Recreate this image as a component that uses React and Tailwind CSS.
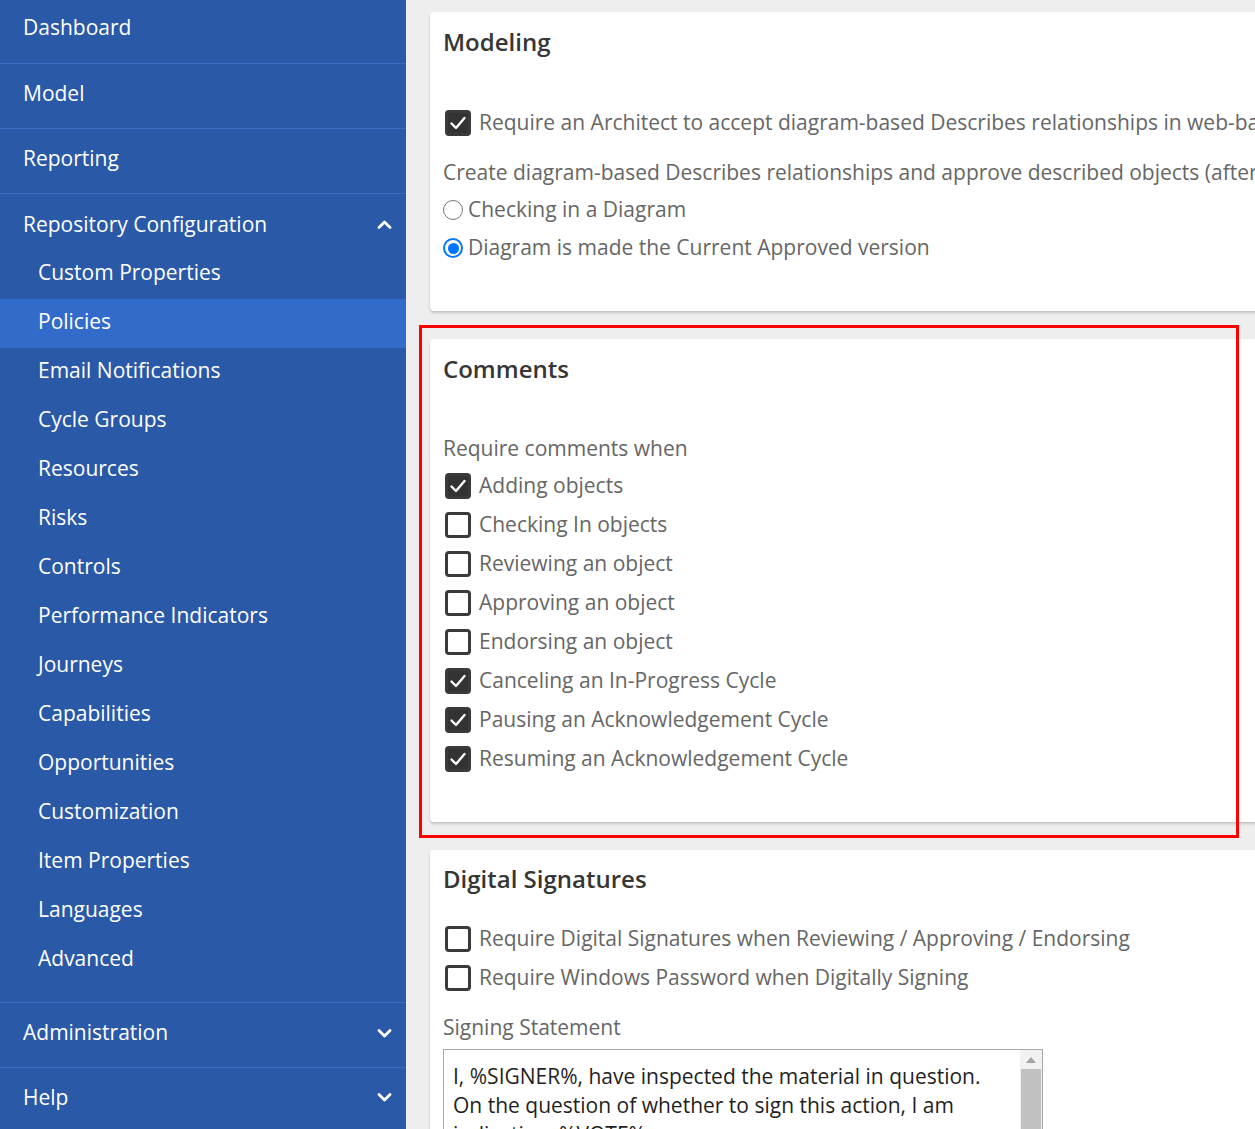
import React from "react";

const topItems = ["Dashboard", "Model", "Reporting"];
const subItems = [
  "Custom Properties",
  "Policies",
  "Email Notifications",
  "Cycle Groups",
  "Resources",
  "Risks",
  "Controls",
  "Performance Indicators",
  "Journeys",
  "Capabilities",
  "Opportunities",
  "Customization",
  "Item Properties",
  "Languages",
  "Advanced",
];

const comments = [
  ["Adding objects", true],
  ["Checking In objects", false],
  ["Reviewing an object", false],
  ["Approving an object", false],
  ["Endorsing an object", false],
  ["Canceling an In-Progress Cycle", true],
  ["Pausing an Acknowledgement Cycle", true],
  ["Resuming an Acknowledgement Cycle", true],
];

const Chevron = ({ up }) => (
  <svg width="15" height="9" viewBox="0 0 15 9" className="text-white">
    <path
      d={up ? "M2 7.5 L7.5 2 L13 7.5" : "M2 1.5 L7.5 7 L13 1.5"}
      fill="none"
      stroke="currentColor"
      strokeWidth="2.8"
      strokeLinecap="round"
      strokeLinejoin="round"
    />
  </svg>
);

const Checkbox = ({ checked }) => (
  <span
    className={`w-[26px] h-[26px] rounded-[4px] border-[3px] border-[#3a3a3a] flex items-center justify-center shrink-0 ${
      checked ? "bg-[#333333]" : "bg-white"
    }`}
  >
    {checked && (
      <svg width="18" height="16" viewBox="0 0 18 16">
        <path d="M2.5 8.5 L7 13 L15.5 3" fill="none" stroke="white" strokeWidth="2.4" strokeLinecap="round" strokeLinejoin="round" />
      </svg>
    )}
  </span>
);

const Radio = ({ checked }) => (
  <span
    className={`w-[20px] h-[20px] rounded-full border flex items-center justify-center shrink-0 bg-white ${
      checked ? "border-[#0075ff] border-2" : "border-[#777777]"
    }`}
  >
    {checked && <span className="w-[11px] h-[11px] rounded-full bg-[#0075ff]" />}
  </span>
);

const CheckRow = ({ label, checked }) => (
  <div className="h-[39px] flex items-center gap-[8px] pl-[2px]">
    <Checkbox checked={checked} />
    <span className="whitespace-nowrap">{label}</span>
  </div>
);

const Card = ({ children, className = "" }) => (
  <div className={`bg-white rounded-[4px] shadow-[0_2px_3px_rgba(0,0,0,0.18)] w-[900px] pl-[13px] ${className}`}>
    {children}
  </div>
);

const Heading = ({ children, className = "" }) => (
  <h2 className={`text-[24px] font-semibold text-[#363636] leading-[30px] ${className}`}>{children}</h2>
);

export default function App() {
  return (
    <div className="flex h-[1129px] w-[1255px] overflow-hidden bg-[#eeeeee] font-['Open_Sans',sans-serif]">
      <aside className="w-[406px] shrink-0 bg-[#2a59a7] text-white text-[21px] flex flex-col overflow-hidden">
        {topItems.map((t, i) => (
          <div
            key={t}
            className={`shrink-0 flex items-center pl-[23px] border-b border-[#3a6dc2] ${
              i === 0 ? "h-[64px] pb-[8px]" : "h-[65px] pb-[4px]"
            }`}
          >
            {t}
          </div>
        ))}
        <div className="shrink-0 h-[56px] flex items-center justify-between pl-[23px] pr-[14px] pt-[5px]">
          <span>Repository Configuration</span>
          <Chevron up />
        </div>
        {subItems.map((s) => (
          <div
            key={s}
            className={`shrink-0 h-[49px] flex items-center pl-[38px] pb-[3px] ${s === "Policies" ? "bg-[#336bca]" : ""}`}
          >
            {s}
          </div>
        ))}
        <div className="shrink-0 h-[18px] border-b border-[#3a6dc2]" />
        <div className="shrink-0 h-[65px] flex items-center justify-between pl-[23px] pr-[14px] pb-[4px] border-b border-[#3a6dc2]">
          <span>Administration</span>
          <Chevron />
        </div>
        <div className="shrink-0 h-[65px] flex items-center justify-between pl-[23px] pr-[14px] pb-[6px]">
          <span>Help</span>
          <Chevron />
        </div>
      </aside>

      <main className="relative flex-1 pl-[24px] pt-[12px] text-[21px] text-[#666666]">
        <Card className="h-[299px]">
          <Heading className="pt-[15px]">Modeling</Heading>
          <div className="mt-[46px]">
            <CheckRow
              checked
              label="Require an Architect to accept diagram-based Describes relationships in web-based diagrams"
            />
          </div>
          <div className="leading-[38px] mt-[11px] whitespace-nowrap">
            Create diagram-based Describes relationships and approve described objects (after review)
          </div>
          <div className="h-[38px] flex items-center gap-[5px]">
            <Radio />
            <span>Checking in a Diagram</span>
          </div>
          <div className="h-[38px] flex items-center gap-[5px]">
            <Radio checked />
            <span>Diagram is made the Current Approved version</span>
          </div>
        </Card>

        <Card className="mt-[28px] h-[483px]">
          <Heading className="pt-[15px]">Comments</Heading>
          <div className="leading-[36px] mt-[46px]">Require comments when</div>
          {comments.map(([l, c]) => (
            <CheckRow key={l} label={l} checked={c} />
          ))}
        </Card>

        <Card className="mt-[28px] h-[400px]">
          <Heading className="pt-[14px]">Digital Signatures</Heading>
          <div className="mt-[25px]">
            <CheckRow label="Require Digital Signatures when Reviewing / Approving / Endorsing" />
            <CheckRow label="Require Windows Password when Digitally Signing" />
          </div>
          <div className="leading-[36px] mt-[12px]">Signing Statement</div>
          <div className="mt-[4px] w-[600px] h-[140px] border border-[#a9a9a9] flex">
            <div className="flex-1 pl-[9px] pt-[12px] text-[#1f1f1f] leading-[29px] whitespace-pre-line">
              {"I, %SIGNER%, have inspected the material in question.\nOn the question of whether to sign this action, I am\nindicating: %VOTE%."}
            </div>
            <div className="w-[22px] bg-[#f1f1f1] flex flex-col items-center pt-[7px]">
              <svg width="10" height="6" viewBox="0 0 10 6">
                <path d="M0 6 L5 0 L10 6 Z" fill="#a3a3a3" />
              </svg>
              <div className="mt-[6px] w-[20px] flex-1 bg-[#c1c1c1]" />
            </div>
          </div>
        </Card>

        <div className="absolute left-[13px] top-[325px] w-[820px] h-[513px] border-[3px] border-[#ff0000] pointer-events-none" />
      </main>
    </div>
  );
}
